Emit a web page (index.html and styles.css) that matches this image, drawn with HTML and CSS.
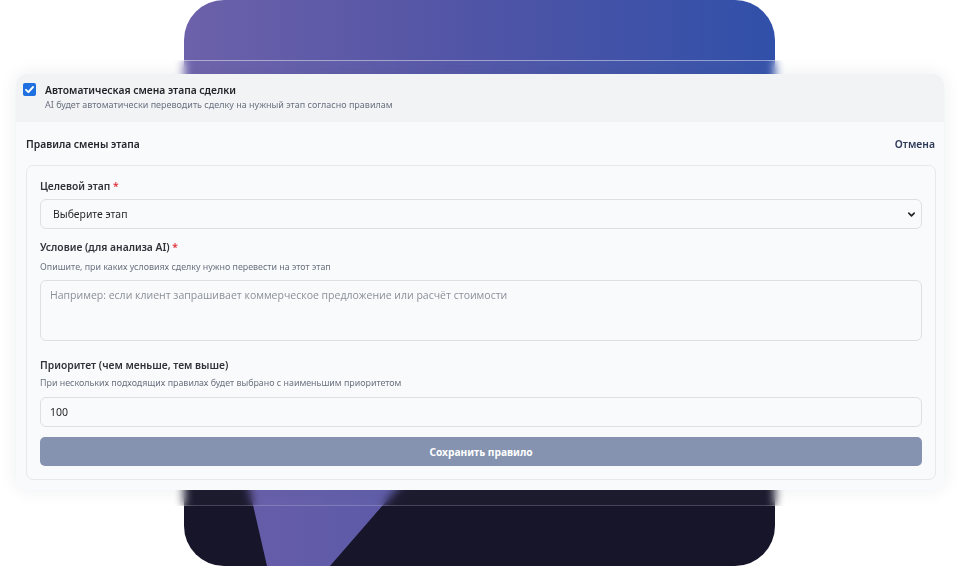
FILE: index.html
```html
<!DOCTYPE html>
<html lang="ru">
<head>
<meta charset="utf-8">
<title>Правила смены этапа</title>
<link rel="stylesheet" href="styles.css">
</head>
<body>
<div class="stage">
  <div class="deco">
    <div class="deco-top"></div>
    <div class="deco-bottom"><div class="deco-tri"></div></div>
  </div>
  <div class="glass">
    <div class="panel">
      <div class="panel-head">
        <span class="check">
          <svg viewBox="0 0 13 13" width="13" height="13"><path d="M3 6.8 L5.4 9.2 L10 4" fill="none" stroke="#fff" stroke-width="1.9" stroke-linecap="round" stroke-linejoin="round"/></svg>
        </span>
        <div class="head-text">
          <div class="head-title">Автоматическая смена этапа сделки</div>
          <div class="head-sub">AI будет автоматически переводить сделку на нужный этап согласно правилам</div>
        </div>
      </div>
      <div class="panel-body">
        <div class="rules-row">
          <span class="rules-title">Правила смены этапа</span>
          <span class="cancel">Отмена</span>
        </div>
        <div class="card">
          <div class="label">Целевой этап <span class="req">*</span></div>
          <div class="select">
            <span>Выберите этап</span>
            <svg viewBox="0 0 10 10" width="9" height="9"><path d="M2 3.5 L5 6.5 L8 3.5" fill="none" stroke="#222" stroke-width="1.8" stroke-linecap="round" stroke-linejoin="round"/></svg>
          </div>
          <div class="label label-2">Условие (для анализа AI) <span class="req">*</span></div>
          <div class="help help-2">Опишите, при каких условиях сделку нужно перевести на этот этап</div>
          <textarea class="area" placeholder="Например: если клиент запрашивает коммерческое предложение или расчёт стоимости"></textarea>
          <div class="label label-3">Приоритет (чем меньше, тем выше)</div>
          <div class="help help-3">При нескольких подходящих правилах будет выбрано с наименьшим приоритетом</div>
          <input class="input" type="text" value="100">
          <button class="save" type="button">Сохранить правило</button>
        </div>
      </div>
    </div>
  </div>
</div>
</body>
</html>
```

FILE: styles.css
```css
* { box-sizing: border-box; }
html, body { margin: 0; padding: 0; background: #ffffff; }
body { font-family: "Noto Sans", "Open Sans", sans-serif; color: #1f2937; }

.stage {
  display: grid;
  width: 960px;
  height: 566px;
  overflow: hidden;
}
.stage > * { grid-area: 1 / 1; }

.deco {
  margin-left: 184px;
  width: 591px;
  height: 566px;
  border-radius: 40px;
  overflow: hidden;
  display: flex;
  flex-direction: column;
}
.deco-top {
  flex: 1;
  background: linear-gradient(90deg, #6c61aa 0%, #5355a6 45%, #3150a9 100%);
}
.deco-bottom {
  height: 266px;
  background: #17152a;
  display: flex;
}
.deco-tri {
  width: 377px;
  height: 266px;
  background: linear-gradient(90deg, #6a5ea9 0%, #5c5aa8 60%, #4f58a6 100%);
  clip-path: polygon(22px 0, 377px 0, 146px 266px, 83px 266px);
}

.glass {
  align-self: start;
  margin-top: 60px;
  height: 446px;
  padding: 13px 16px 15px;
  border-top: 1px solid rgba(255, 255, 255, 0.45);
  border-bottom: 1px solid rgba(255, 255, 255, 0.18);
  backdrop-filter: blur(5px);
  background: rgba(255, 255, 255, 0.03);
}

.panel {
  height: 416px;
  border-radius: 12px;
  background: #f8fafb;
  box-shadow: 0 0 18px rgba(30, 40, 60, 0.08);
  overflow: hidden;
}

.panel-head {
  height: 48px;
  background: #f1f3f5;
  display: flex;
  align-items: flex-start;
  gap: 9px;
  padding: 9px 7px 0;
}
.check {
  width: 13px;
  height: 13px;
  border-radius: 2px;
  background: #1e6fe0;
  display: flex;
  flex: none;
}
.head-text { display: flex; flex-direction: column; }
.head-title {
  font-size: 10.3px;
  font-weight: 600;
  line-height: 14px;
  color: #1f2226;
  margin-top: 0;
}
.head-sub {
  font-size: 9px;
  line-height: 12px;
  color: #6b7280;
  margin-top: 2px;
}

.panel-body {
  padding: 0 8px 10px 10px;
}
.rules-row {
  display: flex;
  justify-content: space-between;
  align-items: center;
  height: 43px;
}
.rules-title {
  font-size: 10.3px;
  font-weight: 600;
  color: #23272d;
}
.cancel {
  font-size: 10.4px;
  font-weight: 600;
  color: #2d3a58;
  margin-right: 1px;
}

.card {
  border: 1px solid #e6e8eb;
  border-radius: 7px;
  background: #f9fafb;
  padding: 12px 13px 13px;
  display: flex;
  flex-direction: column;
}
.label {
  font-size: 10.3px;
  font-weight: 600;
  line-height: 16px;
  color: #2f3339;
}
.req { color: #e0303a; }
.label-2 { margin-top: 10px; }
.label-3 { margin-top: 16px; }
.help {
  font-size: 8.9px;
  line-height: 14px;
  color: #6b7280;
}
.help-2 { margin-top: 5px; }
.help-3 { margin-top: 3px; }

.select {
  margin-top: 5px;
  height: 30px;
  border: 1px solid #dcdfe4;
  border-radius: 6px;
  background: #f9fafb;
  display: flex;
  align-items: center;
  justify-content: space-between;
  padding: 0 5px 0 12px;
  font-size: 10.4px;
  color: #1f2226;
}

.area {
  margin-top: 6px;
  height: 61px;
  border: 1px solid #dcdfe4;
  border-radius: 6px;
  background: #f9fafb;
  padding: 7px 9px;
  resize: none;
  font-family: "Open Sans", "Noto Sans", sans-serif;
  font-size: 10.5px;
  line-height: 15px;
  color: #1f2226;
  outline: none;
}
.area::placeholder { color: #8a9099; }

.input {
  margin-top: 7px;
  height: 30px;
  border: 1px solid #dcdfe4;
  border-radius: 6px;
  background: #f9fafb;
  padding: 0 9px;
  font-family: "Noto Sans", sans-serif;
  font-size: 10.5px;
  color: #1f2226;
  outline: none;
}

.save {
  margin-top: 10px;
  height: 29px;
  border: none;
  border-radius: 5px;
  background: #8593b0;
  color: #ffffff;
  font-family: "Noto Sans", sans-serif;
  font-size: 10.2px;
  font-weight: 700;
}
```
